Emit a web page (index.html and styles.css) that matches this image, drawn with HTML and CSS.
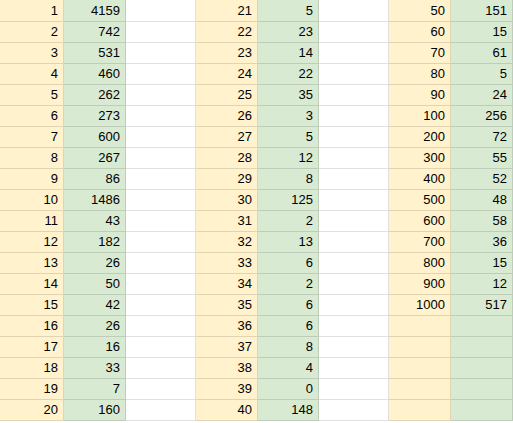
FILE: index.html
```html
<!DOCTYPE html>
<html>
<head>
<meta charset="utf-8">
<link rel="stylesheet" href="styles.css">
</head>
<body>
<div class="sheet">
<div class="c k">1</div><div class="c v">4159</div><div class="c e"></div><div class="c k">21</div><div class="c v">5</div><div class="c e"></div><div class="c k">50</div><div class="c v">151</div>
<div class="c k">2</div><div class="c v">742</div><div class="c e"></div><div class="c k">22</div><div class="c v">23</div><div class="c e"></div><div class="c k">60</div><div class="c v">15</div>
<div class="c k">3</div><div class="c v">531</div><div class="c e"></div><div class="c k">23</div><div class="c v">14</div><div class="c e"></div><div class="c k">70</div><div class="c v">61</div>
<div class="c k">4</div><div class="c v">460</div><div class="c e"></div><div class="c k">24</div><div class="c v">22</div><div class="c e"></div><div class="c k">80</div><div class="c v">5</div>
<div class="c k">5</div><div class="c v">262</div><div class="c e"></div><div class="c k">25</div><div class="c v">35</div><div class="c e"></div><div class="c k">90</div><div class="c v">24</div>
<div class="c k">6</div><div class="c v">273</div><div class="c e"></div><div class="c k">26</div><div class="c v">3</div><div class="c e"></div><div class="c k">100</div><div class="c v">256</div>
<div class="c k">7</div><div class="c v">600</div><div class="c e"></div><div class="c k">27</div><div class="c v">5</div><div class="c e"></div><div class="c k">200</div><div class="c v">72</div>
<div class="c k">8</div><div class="c v">267</div><div class="c e"></div><div class="c k">28</div><div class="c v">12</div><div class="c e"></div><div class="c k">300</div><div class="c v">55</div>
<div class="c k">9</div><div class="c v">86</div><div class="c e"></div><div class="c k">29</div><div class="c v">8</div><div class="c e"></div><div class="c k">400</div><div class="c v">52</div>
<div class="c k">10</div><div class="c v">1486</div><div class="c e"></div><div class="c k">30</div><div class="c v">125</div><div class="c e"></div><div class="c k">500</div><div class="c v">48</div>
<div class="c k">11</div><div class="c v">43</div><div class="c e"></div><div class="c k">31</div><div class="c v">2</div><div class="c e"></div><div class="c k">600</div><div class="c v">58</div>
<div class="c k">12</div><div class="c v">182</div><div class="c e"></div><div class="c k">32</div><div class="c v">13</div><div class="c e"></div><div class="c k">700</div><div class="c v">36</div>
<div class="c k">13</div><div class="c v">26</div><div class="c e"></div><div class="c k">33</div><div class="c v">6</div><div class="c e"></div><div class="c k">800</div><div class="c v">15</div>
<div class="c k">14</div><div class="c v">50</div><div class="c e"></div><div class="c k">34</div><div class="c v">2</div><div class="c e"></div><div class="c k">900</div><div class="c v">12</div>
<div class="c k">15</div><div class="c v">42</div><div class="c e"></div><div class="c k">35</div><div class="c v">6</div><div class="c e"></div><div class="c k">1000</div><div class="c v">517</div>
<div class="c k">16</div><div class="c v">26</div><div class="c e"></div><div class="c k">36</div><div class="c v">6</div><div class="c e"></div><div class="c k"></div><div class="c v"></div>
<div class="c k">17</div><div class="c v">16</div><div class="c e"></div><div class="c k">37</div><div class="c v">8</div><div class="c e"></div><div class="c k"></div><div class="c v"></div>
<div class="c k">18</div><div class="c v">33</div><div class="c e"></div><div class="c k">38</div><div class="c v">4</div><div class="c e"></div><div class="c k"></div><div class="c v"></div>
<div class="c k">19</div><div class="c v">7</div><div class="c e"></div><div class="c k">39</div><div class="c v">0</div><div class="c e"></div><div class="c k"></div><div class="c v"></div>
<div class="c k">20</div><div class="c v">160</div><div class="c e"></div><div class="c k">40</div><div class="c v">148</div><div class="c e"></div><div class="c k"></div><div class="c v"></div>
</div>
</body>
</html>
```
FILE: styles.css
```css
html, body {
  margin: 0;
  padding: 0;
  background: #ffffff;
}
.sheet {
  display: grid;
  grid-template-columns: 64px 62px 70px 62px 61px 70px 62px 62px;
  grid-template-rows: 22px;
  grid-auto-rows: 21px;
  font-family: "Liberation Sans", Arial, sans-serif;
  font-size: 13px;
  color: #000000;
}
.c {
  box-sizing: border-box;
  border-right: 1px solid rgba(0, 0, 0, 0.12);
  border-bottom: 1px solid rgba(0, 0, 0, 0.12);
  display: flex;
  align-items: flex-end;
  justify-content: flex-end;
  padding: 0 5px 2px 0;
  line-height: 16px;
  white-space: nowrap;
  overflow: hidden;
}
.k { background: #fff2cc; }
.v { background: #d9ead3; }
.e { background: #ffffff; }
```
